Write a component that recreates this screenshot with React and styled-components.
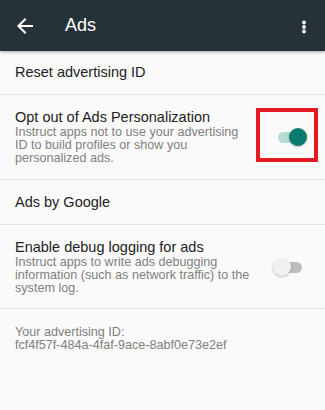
import React from 'react';
import styled, { createGlobalStyle } from 'styled-components';

const GlobalStyle = createGlobalStyle`
  html, body {
    margin: 0;
    padding: 0;
    background: #fafafa;
  }
  body {
    font-family: 'Liberation Sans', Arial, sans-serif;
  }
`;

const App = () => {
  return (
    <Screen>
      <GlobalStyle />
      <Toolbar>
        <IconBtn>
          <svg width='24' height='24' viewBox='0 0 24 24'>
            <path
              d='M20 11H7.83l5.59-5.59L12 4l-8 8 8 8 1.41-1.41L7.83 13H20v-2z'
              fill='#ffffff'
            />
          </svg>
        </IconBtn>
        <Title>Ads</Title>
        <MenuBtn>
          <svg width='8' height='16' viewBox='0 0 8 16'>
            <circle cx='4' cy='2.5' r='1.9' fill='#ffffff' />
            <circle cx='4' cy='7' r='1.9' fill='#ffffff' />
            <circle cx='4' cy='11.5' r='1.9' fill='#ffffff' />
          </svg>
        </MenuBtn>
      </Toolbar>

      <Row $height={43}>
        <Text>
          <Label>Reset advertising ID</Label>
        </Text>
      </Row>

      <Row $top='14px' $bottom='14px'>
        <Text>
          <Label>Opt out of Ads Personalization</Label>
          <Summary>
            Instruct apps not to use your advertising
            <br />
            ID to build profiles or show you
            <br />
            personalized ads.
          </Summary>
        </Text>
        <Switch $on>
          <Track $on />
          <Thumb $on />
        </Switch>
        <Highlight />
      </Row>

      <Row $height={44}>
        <Text>
          <Label>Ads by Google</Label>
        </Text>
      </Row>

      <Row $top='14px' $bottom='13px'>
        <Text>
          <Label>Enable debug logging for ads</Label>
          <Summary>
            Instruct apps to write ads debugging
            <br />
            information (such as network traffic) to the
            <br />
            system log.
          </Summary>
        </Text>
        <Switch $shift='4px'>
          <Track />
          <Thumb />
        </Switch>
      </Row>

      <Footer>
        <Summary>Your advertising ID:</Summary>
        <Summary>fcf4f57f-484a-4faf-9ace-8abf0e73e2ef</Summary>
      </Footer>
    </Screen>
  );
};

export default App;

const Screen = styled.div`
  width: 325px;
  height: 410px;
  background: #fafafa;
  overflow: hidden;
  display: flex;
  flex-direction: column;
`;

const Toolbar = styled.div`
  height: 51px;
  flex-shrink: 0;
  background: #263238;
  display: flex;
  align-items: center;
  padding: 0 0 0 13px;
  box-shadow: 0 1px 3px rgba(0, 0, 0, 0.35);
  position: relative;
  z-index: 1;
`;

const IconBtn = styled.div`
  width: 24px;
  height: 24px;
  display: flex;
  margin-top: 1px;
`;

const Title = styled.div`
  margin-left: 28px;
  color: #ffffff;
  font-size: 18px;
  flex: 1;
`;

const MenuBtn = styled.div`
  width: 8px;
  height: 16px;
  display: flex;
  margin-right: 17px;
  margin-top: 5px;
`;

const Row = styled.div`
  position: relative;
  display: flex;
  align-items: center;
  justify-content: space-between;
  padding: ${(p) => p.$top || '0'} 18px ${(p) => p.$bottom || '0'} 15px;
  height: ${(p) => (p.$height ? `${p.$height}px` : 'auto')};
  border-bottom: 1px solid #e3e3e3;
  flex-shrink: 0;
`;

const Text = styled.div`
  flex: 1;
  display: flex;
  flex-direction: column;
`;

const Label = styled.div`
  font-size: 14.5px;
  line-height: 17px;
  color: #222222;
`;

const Summary = styled.div`
  font-size: 12.6px;
  line-height: 13px;
  color: #808080;
  white-space: nowrap;
`;

const Switch = styled.div`
  position: relative;
  width: 30px;
  height: 18px;
  margin-right: ${(p) => p.$shift || '0'};
  flex-shrink: 0;
`;

const Track = styled.div`
  position: absolute;
  left: 1px;
  right: 1px;
  top: 3.5px;
  height: 11px;
  border-radius: 6px;
  background: ${(p) => (p.$on ? '#b2dcd5' : '#bdbdbd')};
`;

const Thumb = styled.div`
  position: absolute;
  top: 0;
  ${(p) => (p.$on ? 'right: 0;' : 'left: 0;')}
  width: 18px;
  height: 18px;
  border-radius: 50%;
  background: ${(p) => (p.$on ? '#0a7b6c' : '#f1f1f1')};
  box-shadow: 0 1px 2px rgba(0, 0, 0, 0.28);
`;

const Highlight = styled.div`
  position: absolute;
  left: 256px;
  top: 13px;
  width: 54px;
  height: 46px;
  border: 4px solid #e31b23;
`;

const Footer = styled.div`
  padding: 17px 15px;
  display: flex;
  flex-direction: column;
`;
